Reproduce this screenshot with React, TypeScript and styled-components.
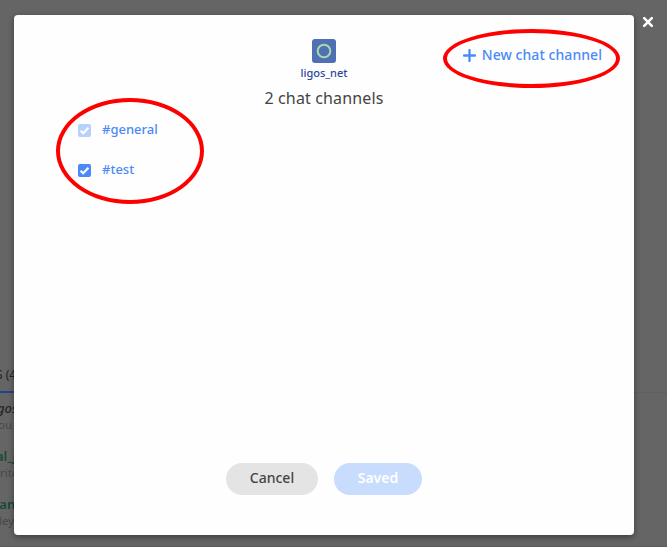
import React from "react";
import styled, { createGlobalStyle } from "styled-components";

const GlobalStyle = createGlobalStyle`
  * { box-sizing: border-box; }
  body { margin: 0; overflow: hidden; background: #656565; font-family: "Noto Sans", "Open Sans", sans-serif; }
`;

const Page = styled.div`
  position: relative;
  height: 547px;
  width: 667px;
  overflow: hidden;
  background: #656565;
  border-bottom: 1px solid #595959;
`;

const Backdrop = styled.div`
  display: flex;
  flex-direction: column;
  padding-top: 364px;
`;

const TabBar = styled.div`
  height: 29px;
  display: flex;
  align-items: stretch;
  border-bottom: 1px solid #5f5f5f;
`;

const ActiveTab = styled.div`
  width: 24px;
  height: 29px;
  border-bottom: 2px solid #1f4590;
  font-size: 12px;
  line-height: 22px;
  color: #222;
  white-space: nowrap;
  text-indent: -4px;
`;

const Member = styled.div`
  height: 48px;
  padding-top: 6px;
  white-space: nowrap;
`;

const MemberName = styled.div<{ $self?: boolean; $shift: number }>`
  height: 18px;
  margin-left: ${(p) => -p.$shift}px;
  font-size: 13px;
  line-height: 18px;
  font-weight: ${(p) => (p.$self ? 500 : 600)};
  font-style: ${(p) => (p.$self ? "italic" : "normal")};
  color: ${(p) => (p.$self ? "#242424" : "#164a36")};
`;

const MemberNote = styled.div<{ $shift: number }>`
  height: 14px;
  margin-left: ${(p) => -p.$shift}px;
  font-size: 11.5px;
  line-height: 15px;
  color: #484848;
`;

const Dialog = styled.section`
  position: absolute;
  left: 14px;
  top: 15px;
  width: 620px;
  height: 520px;
  display: flex;
  flex-direction: column;
  border-radius: 4px;
  background: #fefefe;
  box-shadow: 0 2px 6px rgba(0, 0, 0, 0.4);
`;

const Header = styled.header`
  display: grid;
  grid-template-columns: 1fr auto 1fr;
  height: 96px;
  padding: 24px 32px 0;
`;

const Group = styled.div`
  grid-column: 2;
  display: flex;
  flex-direction: column;
  align-items: center;
`;

const GroupName = styled.div`
  margin-top: 2px;
  font-size: 11px;
  font-weight: 500;
  line-height: 16px;
  color: #2b469f;
`;

const Title = styled.h1`
  margin: 5px 0 0;
  font-size: 16px;
  font-weight: 450;
  line-height: 24px;
  letter-spacing: 0.15px;
  color: #444;
`;

const NewChannel = styled.button`
  justify-self: end;
  align-self: start;
  display: flex;
  align-items: center;
  gap: 6px;
  height: 32px;
  padding: 0;
  border: 0;
  background: none;
  font: 500 14px/20px "Noto Sans", sans-serif;
  letter-spacing: 0.06px;
  color: #4a8af8;
  white-space: nowrap;
`;

const Channels = styled.div`
  flex: 1;
  padding-left: 64px;
`;

const Channel = styled.label`
  display: flex;
  align-items: center;
  gap: 11px;
  height: 40px;
  padding-bottom: 4px;
  font-size: 13px;
  font-weight: 550;
  color: #4a8af8;
`;

const Check = styled.span<{ $disabled?: boolean }>`
  display: grid;
  place-items: center;
  width: 13px;
  height: 13px;
  margin-top: 2px;
  border-radius: 2px;
  background: ${(p) => (p.$disabled ? "#b7d1fe" : "#4a8af8")};
`;

const Footer = styled.footer`
  display: flex;
  gap: 16px;
  height: 72px;
  padding-left: 212px;
`;

const Button = styled.button<{ $primary?: boolean }>`
  width: ${(p) => (p.$primary ? 88 : 92)}px;
  height: 32px;
  padding: 0 0 2px;
  border: 0;
  border-radius: 16px;
  background: ${(p) => (p.$primary ? "#c8dcfe" : "#e4e4e4")};
  color: ${(p) => (p.$primary ? "#fff" : "#444")};
  font: ${(p) => (p.$primary ? 600 : 500)} 14px/20px "Noto Sans", sans-serif;
`;

const Close = styled.button`
  position: absolute;
  left: 642px;
  top: 16px;
  width: 12px;
  height: 12px;
  padding: 0;
  border: 0;
  background: none;
  display: flex;
`;

const Highlight = styled.div<{ $x: number; $y: number; $w: number; $h: number }>`
  position: absolute;
  left: ${(p) => p.$x}px;
  top: ${(p) => p.$y}px;
  width: ${(p) => p.$w}px;
  height: ${(p) => p.$h}px;
  border: 4px solid #fe0000;
  border-radius: 50%;
  pointer-events: none;
`;

const members = [
  { name: "ligos_net", note: "You •", nameShift: 10, noteShift: 8, self: true },
  { name: "al_jo", note: "writes", nameShift: 4, noteShift: 9 },
  { name: "rian_h", note: "Riley", nameShift: 10, noteShift: 11 },
];

const channels = [
  { name: "#general", disabled: true },
  { name: "#test", disabled: false },
];

export default function App() {
  return (
    <Page>
      <GlobalStyle />
      <Backdrop>
        <TabBar>
          <ActiveTab>S (4)</ActiveTab>
        </TabBar>
        {members.map((m) => (
          <Member key={m.name}>
            <MemberName $self={m.self} $shift={m.nameShift}>{m.name}</MemberName>
            <MemberNote $shift={m.noteShift}>{m.note}</MemberNote>
          </Member>
        ))}
      </Backdrop>
      <Dialog>
        <Header>
          <Group>
            <svg width="24" height="24" viewBox="0 0 24 24">
              <rect width="24" height="24" rx="3" fill="#4f70b2" />
              <circle cx="12" cy="12" r="6.3" fill="none" stroke="#a8d7b0" strokeWidth="2" />
            </svg>
            <GroupName>ligos_net</GroupName>
            <Title>2 chat channels</Title>
          </Group>
          <NewChannel>
            <svg width="13" height="13" viewBox="0 0 13 13">
              <path d="M6.5 1v11M1 6.5h11" stroke="#4a8af8" strokeWidth="2.3" strokeLinecap="round" />
            </svg>
            New chat channel
          </NewChannel>
        </Header>
        <Channels>
          {channels.map((c) => (
            <Channel key={c.name}>
              <Check $disabled={c.disabled}>
                <svg width="13" height="13" viewBox="0 0 13 13">
                  <path d="M2.6 6.8 5.2 9.2 10.4 3.7" fill="none" stroke="#fff" strokeWidth="2.2" />
                </svg>
              </Check>
              {c.name}
            </Channel>
          ))}
        </Channels>
        <Footer>
          <Button>Cancel</Button>
          <Button $primary>Saved</Button>
        </Footer>
      </Dialog>
      <Close aria-label="Close">
        <svg width="12" height="12" viewBox="0 0 12 12">
          <path d="M2.2 2.2 9.8 9.8M9.8 2.2 2.2 9.8" stroke="#fff" strokeWidth="2.6" strokeLinecap="round" />
        </svg>
      </Close>
      <Highlight $x={443} $y={29} $w={177} $h={59} />
      <Highlight $x={56} $y={98} $w={148} $h={106} />
    </Page>
  );
}
